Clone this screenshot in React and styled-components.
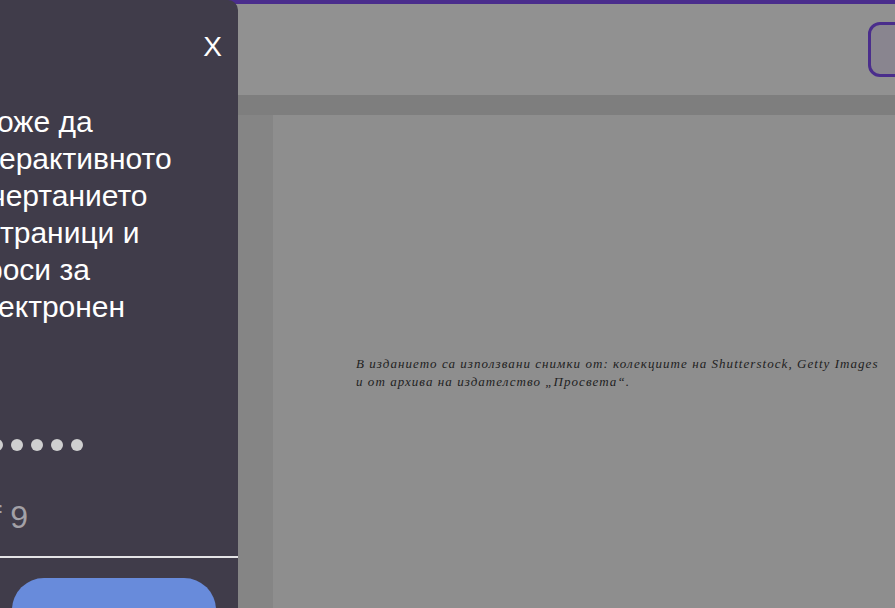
import React from "react";
import styled, { createGlobalStyle } from "styled-components";

const GlobalStyle = createGlobalStyle`
  html, body {
    margin: 0;
    padding: 0;
    height: 100%;
    overflow: hidden;
    background: #8e8e8e;
  }
  #root {
    height: 100%;
  }
`;

// dimmed page underneath the tour drawer
const Screen = styled.div`
  position: relative;
  height: 100vh;
  display: flex;
  flex-direction: column;
  overflow: hidden;
  font-family: "Liberation Sans", Arial, sans-serif;
`;

const Header = styled.header`
  height: 91px;
  flex-shrink: 0;
  display: flex;
  align-items: center;
  justify-content: flex-end;
  background: #919191;
  border-top: 4px solid #4a2d8c;
`;

const HeaderButton = styled.button`
  width: 62px;
  height: 55px;
  margin-right: -35px;
  box-sizing: border-box;
  border: 3px solid #4a2d8c;
  border-radius: 12px;
  background: #89858f;
`;

const Strip = styled.div`
  height: 20px;
  flex-shrink: 0;
  background: #7e7e7e;
`;

const Workspace = styled.main`
  flex: 1;
  display: flex;
  padding-left: 273px;
  background: linear-gradient(90deg, #858585 0%, #858585 88%, #878787 100%);
`;

const Sheet = styled.section`
  flex: 1;
  background: #8e8e8e;
  padding: 240px 0 0 83px;
`;

const Credits = styled.p`
  margin: 0;
  font-family: "Liberation Serif", "Times New Roman", serif;
  font-style: italic;
  font-size: 13px;
  line-height: 18px;
  letter-spacing: 1.05px;
  color: #1e1e1e;
  white-space: nowrap;
`;

// tour drawer
const Drawer = styled.aside`
  position: absolute;
  top: 0;
  left: 0;
  width: 238px;
  height: 100%;
  background: #403c4a;
  border-top-right-radius: 10px;
  overflow: hidden;
  display: flex;
  flex-direction: column;

  & > * {
    flex-shrink: 0;
  }
`;

const CloseRow = styled.div`
  display: flex;
  justify-content: flex-end;
  padding: 31px 16px 0 0;
`;

const Close = styled.button`
  background: none;
  border: 0;
  padding: 0;
  color: #ffffff;
  font-family: "Liberation Sans", Arial, sans-serif;
  font-size: 28px;
  line-height: 32px;
  cursor: pointer;
`;

const Message = styled.div`
  margin-top: 40px;
  color: #ffffff;
  font-size: 30px;
  line-height: 37px;
`;

const Line = styled.div`
  white-space: nowrap;
  margin-left: ${(p) => p.$shift}px;
`;

const Dots = styled.div`
  display: flex;
  gap: 8px;
  margin: 114px 0 0 -89px;
`;

const Dot = styled.span`
  width: 12px;
  height: 12px;
  flex-shrink: 0;
  border-radius: 50%;
  background: #cfcfd0;
`;

const Counter = styled.div`
  margin: 46px 0 0 -52px;
  color: #a3a1a7;
  font-size: 32px;
  line-height: 40px;
  white-space: nowrap;
`;

const Divider = styled.hr`
  margin: 19px 0 0;
  border: 0;
  height: 2px;
  background: #e4e4e6;
`;

const NextButton = styled.button`
  margin: 20px 0 0 12px;
  width: 204px;
  height: 64px;
  border: 0;
  border-radius: 34px;
  background: #688bdb;
`;

const lines = [
  { text: "оже да", shift: -3 },
  { text: "ерактивното", shift: -1 },
  { text: "чертанието", shift: -10 },
  { text: "траници и", shift: 0 },
  { text: "роси за", shift: -14 },
  { text: "ектронен", shift: -2 },
];

const App = () => {
  return (
    <>
      <GlobalStyle />
      <Screen>
        <Header>
          <HeaderButton aria-label="Меню" />
        </Header>
        <Strip />
        <Workspace>
          <Sheet>
            <Credits>
              В изданието са използвани снимки от: колекциите на Shutterstock, Getty Images
              <br />
              и от архива на издателство „Просвета“.
            </Credits>
          </Sheet>
        </Workspace>

        <Drawer>
          <CloseRow>
            <Close aria-label="Затвори">X</Close>
          </CloseRow>
          <Message>
            {lines.map((l) => (
              <Line key={l.text} $shift={l.shift}>
                {l.text}
              </Line>
            ))}
          </Message>
          <Dots>
            {Array.from({ length: 9 }).map((_, i) => (
              <Dot key={i} />
            ))}
          </Dots>
          <Counter>1 of 9</Counter>
          <Divider />
          <NextButton />
        </Drawer>
      </Screen>
    </>
  );
};

export default App;
